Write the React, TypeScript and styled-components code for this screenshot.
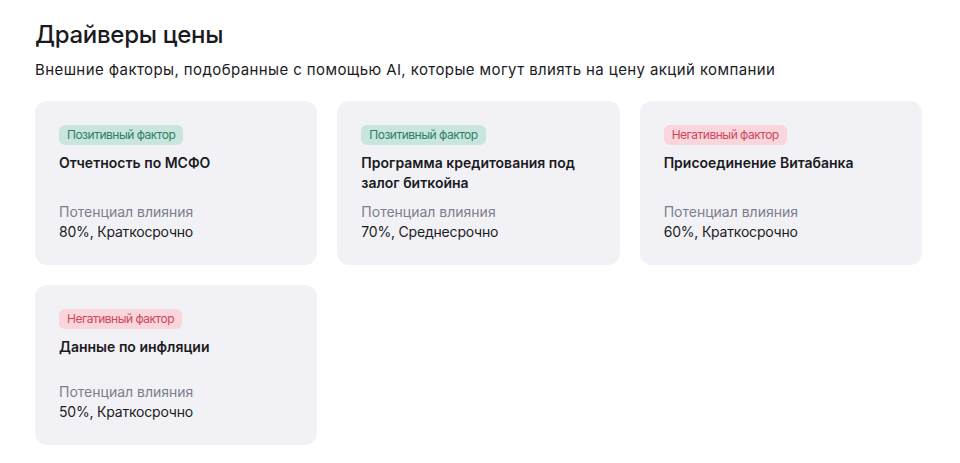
import React from "react";
import styled, { createGlobalStyle } from "styled-components";

type Tone = "positive" | "negative";

interface Driver {
  tone: Tone;
  title: string;
  impact: number;
  term: string;
}

const drivers: Driver[] = [
  { tone: "positive", title: "Отчетность по МСФО", impact: 80, term: "Краткосрочно" },
  {
    tone: "positive",
    title: "Программа кредитования под залог биткойна",
    impact: 70,
    term: "Среднесрочно",
  },
  { tone: "negative", title: "Присоединение Витабанка", impact: 60, term: "Краткосрочно" },
  { tone: "negative", title: "Данные по инфляции", impact: 50, term: "Краткосрочно" },
];

const toneStyles = {
  positive: { bg: "#c9e6de", color: "#2f7d69", label: "Позитивный фактор" },
  negative: { bg: "#f8d6db", color: "#cf4660", label: "Негативный фактор" },
};

const GlobalStyle = createGlobalStyle`
  body {
    margin: 0;
    background: #ffffff;
    font-family: Inter, "Noto Sans", sans-serif;
    color: #1b1b1f;
  }
`;

const Section = styled.section`
  padding: 19px 38px 0 35px;
`;

const Heading = styled.h2`
  margin: 0;
  font-size: 24px;
  line-height: 32px;
  font-weight: 500;
  letter-spacing: -0.3px;
`;

const Lead = styled.p`
  margin: 7px 0 0;
  font-size: 15px;
  line-height: 24px;
  letter-spacing: 0.4px;
  color: #1b1b1f;
`;

const Grid = styled.div`
  margin-top: 19px;
  display: grid;
  grid-template-columns: repeat(3, 1fr);
  gap: 20px;
`;

const Card = styled.article`
  display: flex;
  flex-direction: column;
  align-items: flex-start;
  min-height: 160px;
  box-sizing: border-box;
  padding: 24px 24px 23px;
  border-radius: 12px;
  background: #f2f2f6;
`;

const Badge = styled.span<{ $tone: Tone }>`
  display: inline-flex;
  align-items: center;
  height: 20px;
  padding: 0 8px;
  border-radius: 6px;
  font-size: 12px;
  line-height: 16px;
  letter-spacing: -0.5px;
  background: ${({ $tone }) => toneStyles[$tone].bg};
  color: ${({ $tone }) => toneStyles[$tone].color};
`;

const Title = styled.h3`
  margin: 8px 0 0;
  font-size: 14px;
  line-height: 20px;
  font-weight: 600;
  color: #1b1b1f;
`;

const Meta = styled.div`
  margin-top: auto;
  padding-top: 9px;
  font-size: 14px;
  line-height: 20px;
`;

const MetaLabel = styled.div`
  color: #7b7e8c;
`;

const MetaValue = styled.div`
  color: #1b1b1f;
  letter-spacing: -0.2px;
`;

export default function App() {
  return (
    <>
      <GlobalStyle />
      <Section>
        <Heading>Драйверы цены</Heading>
        <Lead>
          Внешние факторы, подобранные с помощью AI, которые могут влиять на цену акций компании
        </Lead>
        <Grid>
          {drivers.map((d) => (
            <Card key={d.title}>
              <Badge $tone={d.tone}>{toneStyles[d.tone].label}</Badge>
              <Title>{d.title}</Title>
              <Meta>
                <MetaLabel>Потенциал влияния</MetaLabel>
                <MetaValue>
                  {d.impact}%, {d.term}
                </MetaValue>
              </Meta>
            </Card>
          ))}
        </Grid>
      </Section>
    </>
  );
}
